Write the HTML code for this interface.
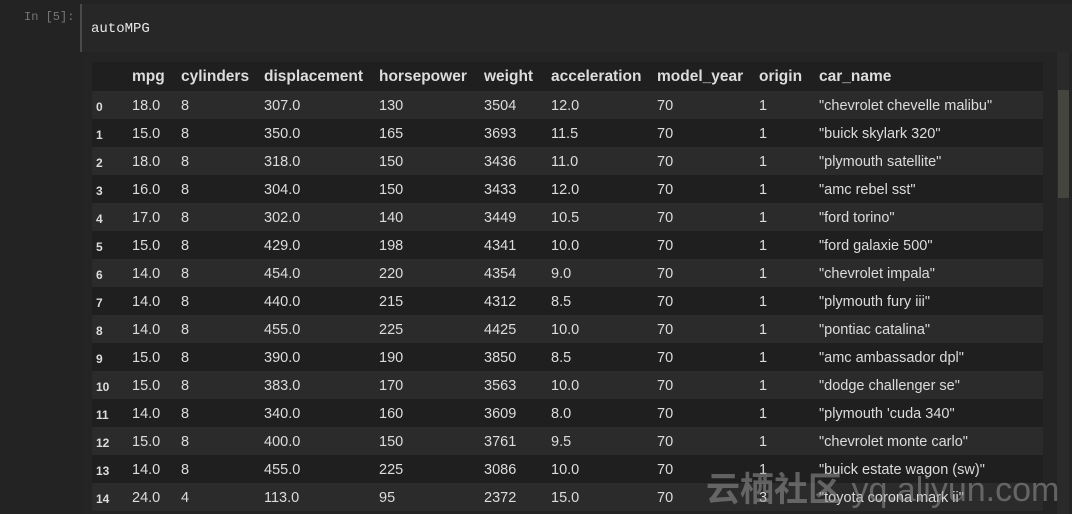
<!DOCTYPE html><html><head><style>
body{margin:0;width:1072px;height:514px;background:#232323;overflow:hidden;font-family:"Liberation Sans",sans-serif;color:#dcdcdc;position:relative}
.in{position:absolute;left:80px;top:4px;width:992px;height:48px;background:#272727;border-left:2px solid #4a4a4a}
.lbl{position:absolute;left:24px;top:10px;font-family:"Liberation Mono",monospace;font-size:12px;color:#777}
.code{position:absolute;left:9px;top:17px;font-family:"Liberation Mono",monospace;font-size:14px;color:#e8e8e8}
.outbg{position:absolute;left:82px;top:52px;width:990px;height:462px;background:#242424}
.row{position:absolute;left:92px;width:951px;height:28px;font-size:14.5px}
.row span{position:absolute;top:7px;white-space:pre}
.h{font-weight:bold;font-size:15.5px;top:6px!important}
.ix{font-weight:bold;font-size:12px;top:9px!important}
.sb{position:absolute;left:1057px;top:52px;width:12px;height:462px;background:#2a2a2a}
.th{position:absolute;left:1058px;top:90px;width:11px;height:108px;background:#45453f}
.wm{position:absolute;left:706px;top:462px;font-size:34px;color:rgba(150,150,150,.55);font-family:"Liberation Sans","Noto Sans CJK SC",sans-serif;font-weight:bold;white-space:nowrap}
</style></head><body>
<div class="in"><div class="code">autoMPG</div></div>
<div class="lbl">In  [5]:</div>
<div class="outbg"></div>
<div id="t"></div>
<div class="sb"></div><div class="th"></div>
<div class="wm">云栖社区 <span style="font-weight:normal">yq.aliyun.com</span></div>
<script>
var xs=[4,40,89,172,287,392,459,565,667,727];
var H=["","mpg","cylinders","displacement","horsepower","weight","acceleration","model_year","origin","car_name"];
var D=[["18.0",8,"307.0",130,3504,"12.0",1,"chevrolet chevelle malibu"],["15.0",8,"350.0",165,3693,"11.5",1,"buick skylark 320"],["18.0",8,"318.0",150,3436,"11.0",1,"plymouth satellite"],["16.0",8,"304.0",150,3433,"12.0",1,"amc rebel sst"],["17.0",8,"302.0",140,3449,"10.5",1,"ford torino"],["15.0",8,"429.0",198,4341,"10.0",1,"ford galaxie 500"],["14.0",8,"454.0",220,4354,"9.0",1,"chevrolet impala"],["14.0",8,"440.0",215,4312,"8.5",1,"plymouth fury iii"],["14.0",8,"455.0",225,4425,"10.0",1,"pontiac catalina"],["15.0",8,"390.0",190,3850,"8.5",1,"amc ambassador dpl"],["15.0",8,"383.0",170,3563,"10.0",1,"dodge challenger se"],["14.0",8,"340.0",160,3609,"8.0",1,"plymouth 'cuda 340"],["15.0",8,"400.0",150,3761,"9.5",1,"chevrolet monte carlo"],["14.0",8,"455.0",225,3086,"10.0",1,"buick estate wagon (sw)"],["24.0",4,"113.0",95,2372,"15.0",3,"toyota corona mark ii"]];
var h='<div class="row" style="top:62px;height:29px;background:#1f1f1f">';
H.forEach((c,i)=>h+='<span class="h" style="left:'+xs[i]+'px">'+c+'</span>');h+='</div>';
D.forEach((r,k)=>{var v=[k,r[0],r[1],r[2],r[3],r[4],r[5],70,r[6],'"'+r[7]+'"'];
h+='<div class="row" style="top:'+(91+k*28)+'px;background:'+(k%2?'#1f1f1f':'#2b2b2b')+'">';
v.forEach((c,i)=>h+='<span '+(i==0?'class="ix" ':'')+'style="left:'+xs[i]+'px">'+c+'</span>');h+='</div>';});
document.getElementById('t').innerHTML=h;
</script>
</body></html>
